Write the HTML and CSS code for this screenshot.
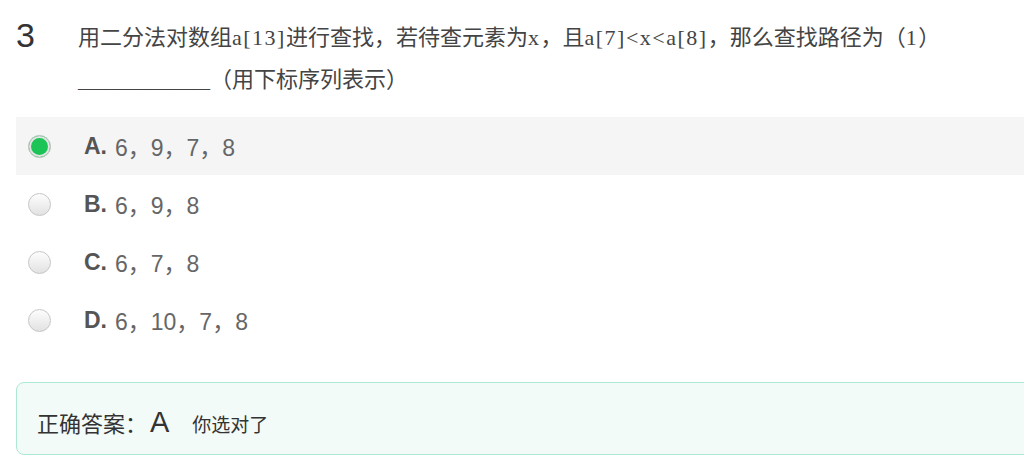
FILE: index.html
```html
<!DOCTYPE html>
<html>
<head>
    <meta charset="utf-8">
    <link rel="stylesheet" href="styles.css">
</head>
<body>
    <div class="page">
        <div class="question">
            <div class="q-num">3</div>
            <div class="q-text">用二分法对数组<span class="en">a[13]</span>进行查找，若待查元素为<span class="en">x</span>，且<span class="en">a[7]&lt;x&lt;a[8]</span>，那么查找路径为（<span class="en">1</span>）<span class="blank">____________</span>（用下标序列表示）</div>
        </div>
        <ul class="options">
            <li class="option selected"><span class="radio"></span><b>A.</b><span class="val">6，9，7，8</span></li>
            <li class="option"><span class="radio"></span><b>B.</b><span class="val">6，9，8</span></li>
            <li class="option"><span class="radio"></span><b>C.</b><span class="val">6，7，8</span></li>
            <li class="option"><span class="radio"></span><b>D.</b><span class="val">6，10，7，8</span></li>
        </ul>
        <div class="answer">
            <span class="answer-label">正确答案：</span><span class="answer-key">A</span><span class="answer-note">你选对了</span>
        </div>
    </div>
</body>
</html>
```

FILE: styles.css
```css
body {
    margin: 0;
    padding: 0;
    background: #fff;
    overflow: hidden;
    font-family: "Liberation Sans", Arial, "Noto Sans CJK SC", sans-serif;
}
.page {
    width: 1080px;
    padding: 14px 0 0 16px;
}
.question {
    display: flex;
}
.q-num {
    width: 62px;
    flex: none;
    font-size: 34px;
    line-height: 42px;
    color: #333;
}
.q-text {
    width: 880px;
    font-family: "Noto Sans CJK SC", sans-serif;
    font-size: 22px;
    line-height: 42px;
    color: #444;
}
.q-text .en,
.q-text .blank {
    font-family: "Liberation Serif", serif;
    line-height: 1;
}
.q-text .en {
    letter-spacing: 1.5px;
}
.options {
    list-style: none;
    margin: 19px 0 0 0;
    padding: 0;
}
.option {
    display: flex;
    align-items: center;
    height: 58px;
    padding-left: 12px;
    color: #666;
}
.option.selected {
    background: #f5f5f5;
}
.option b {
    font-size: 23px;
    color: #555;
    margin-left: 33px;
    margin-right: 8px;
}
.val {
    font-family: "Liberation Sans", "Noto Sans CJK SC", sans-serif;
    font-size: 23px;
}
.radio {
    width: 21px;
    height: 21px;
    border: 1px solid #c6c6c6;
    border-radius: 50%;
    background: linear-gradient(#fdfdfd, #e2e2e2);
    flex: none;
}
.selected .radio {
    background: #1cc457;
    box-shadow: inset 0 0 0 2px #e4e4e4;
}
.answer {
    margin-top: 33px;
    height: 63px;
    padding: 8px 0 0 20px;
    line-height: 63px;
    border: 1px solid #ace8d3;
    border-radius: 8px;
    background: #f3fbf8;
    color: #333;
}
.answer-label {
    font-size: 22px;
}
.answer-key {
    font-size: 29px;
    margin-left: 3px;
}
.answer-note {
    font-size: 19px;
    margin-left: 23px;
}
```
